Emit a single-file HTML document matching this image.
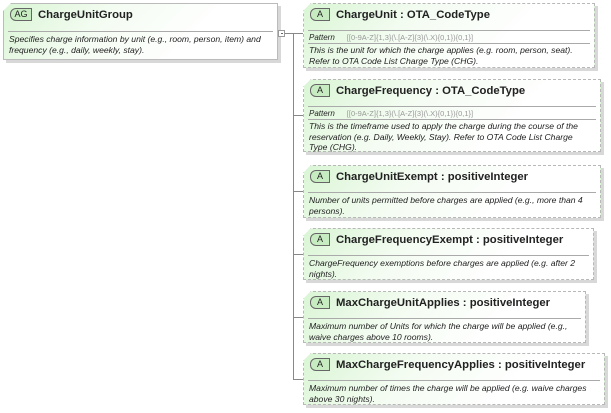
<!DOCTYPE html>
<html><head><style>
body{margin:0;width:611px;height:413px;background:#fff;position:relative;font-family:"Liberation Sans",sans-serif;overflow:hidden}
.b{position:absolute;box-sizing:border-box;border:1px dashed #b8b8b8;background:linear-gradient(135deg,#d9f5d4 0%,#f4fcf2 35%,#fff 70%);box-shadow:3px 3px 0 #d8d8d8}
.b::before{content:"";position:absolute;left:-1px;top:-1px;width:8px;height:8px;background:#fff;clip-path:polygon(0 0,100% 0,0 100%)}
.h{position:absolute;left:6px;top:4px;height:16px;font-weight:bold;font-size:11.3px;color:#222;white-space:nowrap}
.ic{display:inline-block;width:18px;height:11px;border:1px solid #666;border-radius:6px 0 0 6px;background:#c8ecc2;font-size:9px;font-weight:normal;text-align:center;line-height:11px;margin-right:6px;vertical-align:1px;color:#222}
.sep{position:absolute;left:4px;right:4px;border-top:1px solid #aaa}
.p{position:absolute;left:5px;font-size:8px;font-style:italic;color:#222}
.p span{font-style:normal;color:#999;margin-left:12px;font-size:7.5px}
.d{position:absolute;left:5px;right:5px;font-size:8.6px;font-style:italic;color:#222;line-height:10.5px}
.l{position:absolute;background:#888}
</style></head><body>
<div class="b" style="left:3px;top:3px;width:275px;height:57px;border-style:solid;border-color:#bbb">
<div class="h"><span class="ic" style="width:20px">AG</span>ChargeUnitGroup</div>
<div class="sep" style="top:27px"></div>
<div class="d" style="top:30px">Specifies charge information by unit (e.g., room, person, item) and frequency (e.g., daily, weekly, stay).</div>
</div>
<div style="position:absolute;left:278px;top:30px;width:7px;height:7px;border:1px solid #999;background:#fff;box-sizing:border-box"></div>
<div class="l" style="left:281px;top:33px;width:2px;height:1px;background:#666"></div>
<div class="l" style="left:285px;top:33px;width:9px;height:1px"></div>
<div class="l" style="left:293px;top:33px;width:1px;height:347px"></div>
<div class="l" style="left:293px;top:33px;width:10px;height:1px"></div>
<div class="l" style="left:293px;top:115px;width:10px;height:1px"></div>
<div class="l" style="left:293px;top:191px;width:10px;height:1px"></div>
<div class="l" style="left:293px;top:254px;width:10px;height:1px"></div>
<div class="l" style="left:293px;top:317px;width:10px;height:1px"></div>
<div class="l" style="left:293px;top:379px;width:10px;height:1px"></div>

<div class="b" style="left:303px;top:3px;width:292px;height:65px">
<div class="h"><span class="ic">A</span>ChargeUnit : OTA_CodeType</div>
<div class="sep" style="top:26px"></div>
<div class="p" style="top:29px">Pattern<span>[[0-9A-Z]{1,3}(\.[A-Z]{3}(\.X){0,1}){0,1}]</span></div>
<div class="sep" style="top:39px"></div>
<div class="d" style="top:41px">This is the unit for which the charge applies (e.g. room, person, seat). Refer to OTA Code List Charge Type (CHG).</div>
</div>

<div class="b" style="left:303px;top:79px;width:298px;height:73px">
<div class="h"><span class="ic">A</span>ChargeFrequency : OTA_CodeType</div>
<div class="sep" style="top:26px"></div>
<div class="p" style="top:29px">Pattern<span>[[0-9A-Z]{1,3}(\.[A-Z]{3}(\.X){0,1}){0,1}]</span></div>
<div class="sep" style="top:39px"></div>
<div class="d" style="top:41px;right:14px">This is the timeframe used to apply the charge during the course of the reservation (e.g. Daily, Weekly, Stay). Refer to OTA Code List Charge Type (CHG).</div>
</div>

<div class="b" style="left:303px;top:165px;width:298px;height:53px">
<div class="h"><span class="ic">A</span>ChargeUnitExempt : positiveInteger</div>
<div class="sep" style="top:26px"></div>
<div class="d" style="top:29px">Number of units permitted before charges are applied (e.g., more than 4 persons).</div>
</div>

<div class="b" style="left:303px;top:228px;width:291px;height:52px">
<div class="h"><span class="ic">A</span>ChargeFrequencyExempt : positiveInteger</div>
<div class="sep" style="top:26px"></div>
<div class="d" style="top:29px">ChargeFrequency exemptions before charges are applied (e.g. after 2 nights).</div>
</div>

<div class="b" style="left:303px;top:291px;width:283px;height:52px">
<div class="h"><span class="ic">A</span>MaxChargeUnitApplies : positiveInteger</div>
<div class="sep" style="top:26px"></div>
<div class="d" style="top:29px">Maximum number of Units for which the charge will be applied (e.g., waive charges above 10 rooms).</div>
</div>

<div class="b" style="left:303px;top:353px;width:302px;height:52px">
<div class="h"><span class="ic">A</span>MaxChargeFrequencyApplies : positiveInteger</div>
<div class="sep" style="top:26px"></div>
<div class="d" style="top:29px">Maximum number of times the charge will be applied (e.g. waive charges above 30 nights).</div>
</div>
</body></html>
